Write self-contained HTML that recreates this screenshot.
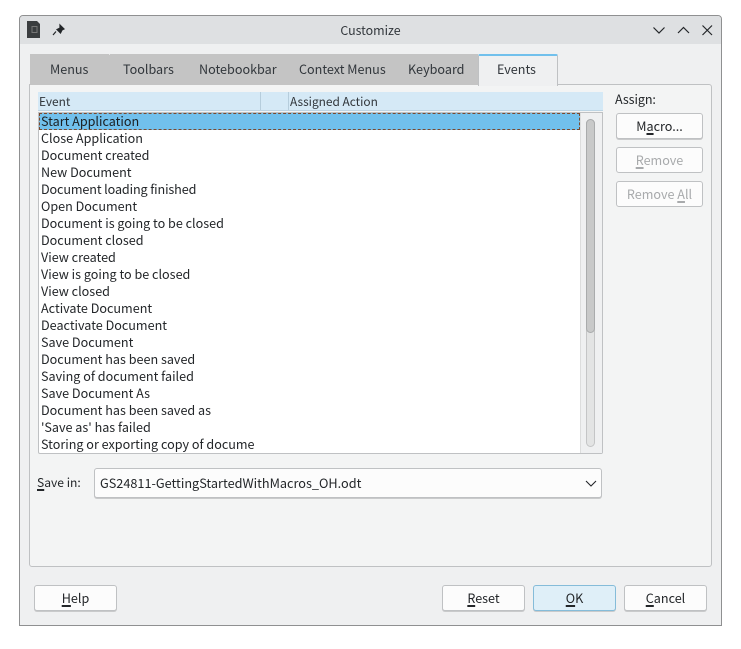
<!DOCTYPE html>
<html><head><meta charset="utf-8"><style>
html,body{margin:0;padding:0;background:#fff}
body{width:741px;height:649px;position:relative;overflow:hidden;font-family:"Noto Sans CJK JP","DejaVu Sans","Liberation Sans",sans-serif;font-size:12.6px;color:#232629}
div,span.a{position:absolute;box-sizing:border-box}
.t{white-space:nowrap;line-height:17px;height:17px}
.tab{top:54px;height:30px;line-height:30px;color:#31363b;white-space:nowrap}
.btn{background:#fcfcfc;border:1px solid #bfc1c3;border-radius:3px;text-align:center;line-height:23px;box-shadow:0 1px 0 #c9cacb;white-space:nowrap}
.dis{color:#a8aaac;box-shadow:none}
u{text-underline-offset:2px;text-decoration-thickness:1.5px}
.r{left:41px;width:213px;overflow:hidden}
</style></head><body>
<div style="left:19px;top:15px;width:703px;height:611px;background:#eff0f1;border:1px solid #8f9091;border-radius:4px 4px 0 0"></div>
<div style="left:20px;top:16px;width:701px;height:28px;background:#dee0e2;border-radius:3px 3px 0 0"></div>
<svg style="position:absolute;left:0;top:0" width="741" height="60">
<path d="M27 21h10l3 3V38H27z" fill="#3a3d3f"/><rect x="32" y="26.500" width="5" height="6" fill="none" stroke="#777" stroke-width="1"/>
<path d="M60 25l4 4-2 1-1.500 3-3.500-3.500 3-1.500zM56 31.500L53 35" fill="#232629" stroke="#232629" stroke-width="1.200"/>
<path d="M653.500 27.500l5.500 5.500 5.500-5.500M678 33l5.500-5.500 5.500 5.500M702.500 25.500l9.500 9.500M712 25.500l-9.500 9.500" fill="none" stroke="#232629" stroke-width="1.200"/>
</svg>
<div class="t" style="left:20px;width:701px;top:22px;text-align:center;color:#31363b;font-size:12.4px">Customize</div>

<div style="left:30px;top:54px;width:448px;height:31px;background:#c4c4c4"></div>
<div style="left:109px;top:54px;width:1px;height:1px;background:#e6e6e6"></div>
<div style="left:29px;top:84px;width:683px;height:483px;background:#f3f4f4;border:1px solid #bfc1c3;border-radius:0 3px 3px 3px"></div>
<div style="left:29px;top:84px;width:450px;height:1px;background:#c4c4c4"></div>
<div class="tab" style="left:50px">Menus</div>
<div class="tab" style="left:123px">Toolbars</div>
<div class="tab" style="left:199px">Notebookbar</div>
<div class="tab" style="left:299px">Context Menus</div>
<div class="tab" style="left:408px">Keyboard</div>
<div style="left:478px;top:54px;width:80px;height:32px;background:#eff0f1;border:1px solid #bfc1c3;border-top:2px solid #71c0ec;border-bottom:0;border-radius:2px 2px 0 0"></div>
<div class="tab" style="left:497px;top:54px;color:#31363b">Events</div>

<div style="left:38px;top:92px;width:565px;height:19px;background:#d5e9f6;border-bottom:1px solid #bdd5e4"></div>
<div style="left:260px;top:92px;width:1px;height:18px;background:#b6cddc"></div>
<div style="left:288px;top:92px;width:1px;height:18px;background:#b6cddc"></div>
<div class="t" style="left:39px;top:93px;font-size:11.9px;color:#31363b">Event</div>
<div class="t" style="left:290px;top:93px;font-size:11.9px;color:#31363b">Assigned Action</div>

<div style="left:38px;top:112px;width:565px;height:342px;background:#fff;border:1px solid #bfc1c3;border-radius:0 0 2px 2px"></div>
<div style="left:580px;top:113px;width:22px;height:340px;background:#eff0f1;border-left:1px solid #dcdddd"></div>
<div style="left:586px;top:119px;width:9px;height:328px;background:#e3e4e4;border:1px solid #c4c5c6;border-radius:4.500px"></div>
<div style="left:586px;top:119px;width:9px;height:214px;background:#c8c9c9;border:1px solid #a9abac;border-radius:4.500px"></div>
<div style="left:39px;top:113px;width:541px;height:17px;background:#71c0ec;border:1px dashed #7a4a30"></div>

<div class="t r" style="top:112px;color:#1b1e20">Start Application</div>
<div class="t r" style="top:129px">Close Application</div>
<div class="t r" style="top:146px">Document created</div>
<div class="t r" style="top:163px">New Document</div>
<div class="t r" style="top:180px;letter-spacing:-.12px">Document loading finished</div>
<div class="t r" style="top:197px">Open Document</div>
<div class="t r" style="top:214px">Document is going to be closed</div>
<div class="t r" style="top:231px">Document closed</div>
<div class="t r" style="top:248px">View created</div>
<div class="t r" style="top:265px">View is going to be closed</div>
<div class="t r" style="top:282px">View closed</div>
<div class="t r" style="top:299px">Activate Document</div>
<div class="t r" style="top:316px">Deactivate Document</div>
<div class="t r" style="top:333px">Save Document</div>
<div class="t r" style="top:350px">Document has been saved</div>
<div class="t r" style="top:367px">Saving of document failed</div>
<div class="t r" style="top:384px">Save Document As</div>
<div class="t r" style="top:401px">Document has been saved as</div>
<div class="t r" style="top:418px">'Save as' has failed</div>
<div class="t r" style="top:435px">Storing or exporting copy of document</div>

<div class="t" style="left:615px;top:90px;letter-spacing:-.1px">Assign:</div>
<div class="btn" style="left:616px;top:113px;width:87px;height:26px">M<u>a</u>cro...</div>
<div class="btn dis" style="left:616px;top:147px;width:87px;height:26px"><u>R</u>emove</div>
<div class="btn dis" style="left:616px;top:181px;width:87px;height:26px">Remove <u>A</u>ll</div>

<div class="t" style="left:37px;top:474px;font-size:12.1px"><u>S</u>ave in:</div>
<div class="btn" style="left:94px;top:468px;width:508px;height:30px;line-height:27px;text-align:left;padding-left:5px;font-size:12.7px">GS24811-GettingStartedWithMacros_OH.odt</div>
<svg style="position:absolute;left:585px;top:480px" width="12" height="8"><path d="M1 1l5 5 5-5" fill="none" stroke="#232629" stroke-width="1.100"/></svg>

<div class="btn" style="left:34px;top:585px;width:83px;height:26px"><u>H</u>elp</div>
<div class="btn" style="left:442px;top:585px;width:83px;height:26px"><u>R</u>eset</div>
<div class="btn" style="left:533px;top:585px;width:83px;height:26px;background:#dfeff8;border-color:#85bcd9"><u>O</u>K</div>
<div class="btn" style="left:624px;top:585px;width:83px;height:26px"><u>C</u>ancel</div>
</body></html>
